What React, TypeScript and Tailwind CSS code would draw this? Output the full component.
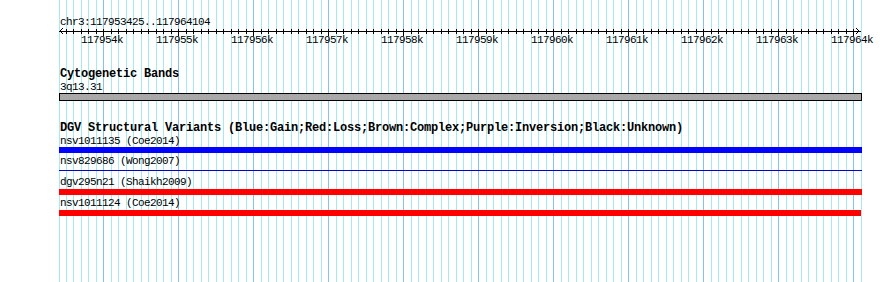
import React from "react";

const gridLines: { x: number; major: boolean }[] = (() => {
  const xs: { x: number; major: boolean }[] = [{ x: 59, major: false }];
  for (let j = -5; j <= 101; j++) {
    xs.push({ x: Math.round(103 + 7.5 * j), major: j % 10 === 0 });
  }
  return xs;
})();

const majors = Array.from({ length: 11 }, (_, i) => ({
  x: 103 + 75 * i,
  label: `${117954 + i}k`,
}));

function Grid() {
  return (
    <svg
      className="absolute left-0 top-0"
      width={890}
      height={282}
      shapeRendering="crispEdges"
    >
      {gridLines.map((g, i) => (
        <rect
          key={i}
          x={g.x}
          y={0}
          width={1}
          height={282}
          fill={g.major ? "#84c4ea" : "#a4eaf0"}
        />
      ))}
    </svg>
  );
}

function Ruler() {
  return (
    <svg width={890} height={9} shapeRendering="crispEdges" className="block">
      <rect x={59} y={4} width={802} height={1} fill="#000" />
      {gridLines
        .filter((g) => g.x > 62 && g.x < 857)
        .map((g, i) => (
          <rect
            key={i}
            x={g.x}
            y={2}
            width={1}
            height={g.major ? 7 : 5}
            fill="#000"
          />
        ))}
      <polyline
        points="63,1 60,4 63,7"
        fill="none"
        stroke="#000"
        strokeWidth={1}
      />
      <polyline
        points="856,1 859,4 856,7"
        fill="none"
        stroke="#000"
        strokeWidth={1}
      />
    </svg>
  );
}

function Label({ children, className = "" }: { children: React.ReactNode; className?: string }) {
  return (
    <div
      className={`ml-[60px] h-[11px] text-[11px] leading-[11px] tracking-[-0.6px] whitespace-pre ${className}`}
    >
      {children}
    </div>
  );
}

function Title({ children, className = "" }: { children: React.ReactNode; className?: string }) {
  return (
    <div
      className={`ml-[60px] h-[12px] text-[12px] leading-[12px] tracking-[-0.2px] font-bold whitespace-pre ${className}`}
    >
      {children}
    </div>
  );
}

export default function App() {
  return (
    <div className="relative w-[890px] h-[282px] overflow-hidden bg-white">
      <Grid />
      <div className="relative flex flex-col pt-[17px] font-['Liberation_Mono',monospace] text-black">
        <div className="ml-[60px] h-[10px] text-[11px] leading-[10px] tracking-[-0.6px] whitespace-pre">
          chr3:117953425..117964104
        </div>
        <Ruler />
        <div className="relative h-[8px] text-[11px] leading-[8px] tracking-[-0.6px]">
          {majors.map((m) => (
            <span key={m.label} className="absolute top-0 whitespace-pre" style={{ left: m.x - 22 }}>
              {m.label}
            </span>
          ))}
        </div>

        <Title className="mt-[24px]">Cytogenetic Bands</Title>
        <Label className="mt-[2px]">3q13.31</Label>
        <div className="ml-[59px] h-[8px] w-[803px] border border-black bg-[#a9a9a9]" />

        <Title className="mt-[21px]">
          DGV Structural Variants (Blue:Gain;Red:Loss;Brown:Complex;Purple:Inversion;Black:Unknown)
        </Title>
        <Label className="mt-[2px]">nsv1011135 (Coe2014)</Label>
        <div className="ml-[59px] h-[6px] w-[803px] bg-[#0000ff]" />
        <Label className="mt-[3px]">nsv829686 (Wong2007)</Label>
        <div className="ml-[59px] h-[6px] w-[803px] flex flex-col">
          <div className="mt-[3px] h-[1px] bg-[#0000c8]" />
        </div>
        <Label className="mt-[4px]">dgv295n21 (Shaikh2009)</Label>
        <div className="mt-[1px] ml-[59px] h-[6px] w-[803px] bg-[#ff0000]" />
        <Label className="mt-[3px]">nsv1011124 (Coe2014)</Label>
        <div className="mt-[1px] ml-[59px] h-[6px] w-[802px] bg-[#ff0000]" />
      </div>
    </div>
  );
}
